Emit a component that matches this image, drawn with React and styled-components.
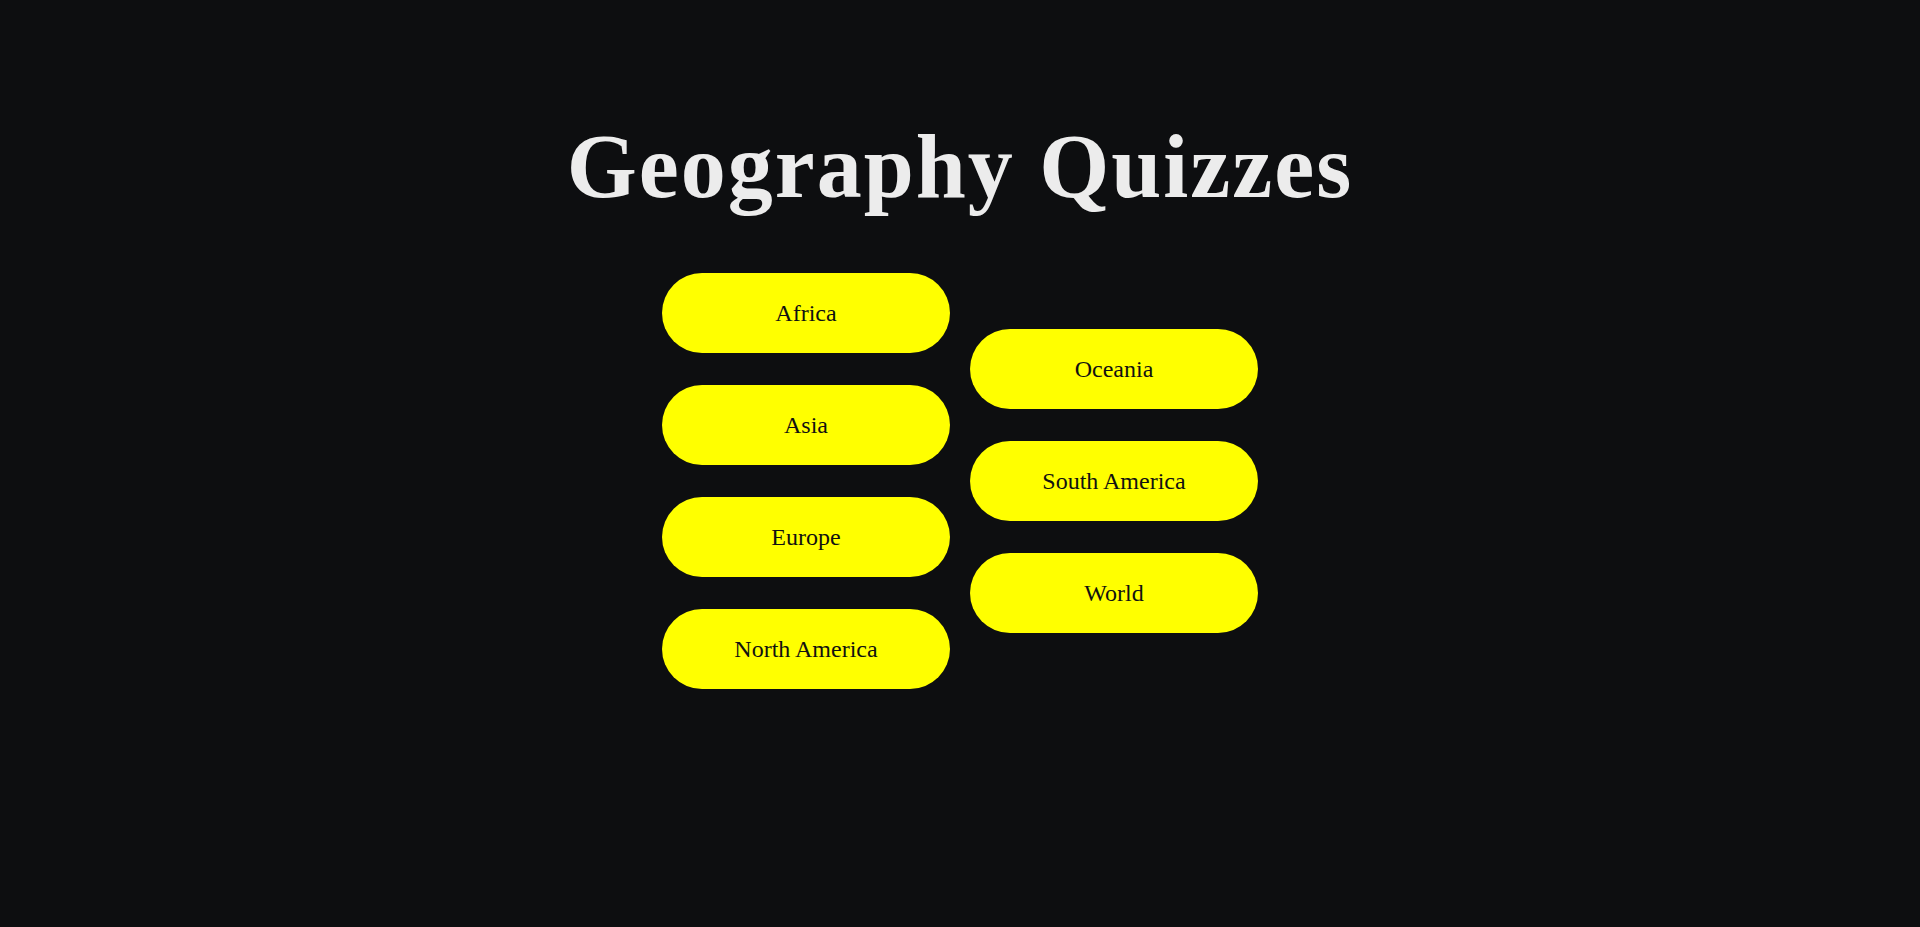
import React from 'react'
import styled, { createGlobalStyle } from 'styled-components'

const GlobalStyle = createGlobalStyle`
  html, body {
    margin: 0;
    padding: 0;
    background-color: #0d0e10;
  }
`

const Page = styled.div`
  min-height: 100vh;
  box-sizing: border-box;
  padding-top: 113px;
  display: flex;
  flex-direction: column;
  align-items: center;
  font-family: "Liberation Serif", "DejaVu Serif", serif;
`

const Title = styled.h1`
  margin: 0;
  font-size: 90px;
  line-height: 1.2;
  letter-spacing: 2px;
  font-weight: bold;
  color: #ececec;
`

const Columns = styled.div`
  margin-top: 52px;
  display: flex;
  align-items: center;
  justify-content: center;
  gap: 20px;
`

const Column = styled.div`
  display: flex;
  flex-direction: column;
  gap: 32px;
`

const QuizButton = styled.button`
  width: 288px;
  height: 80px;
  border: none;
  border-radius: 40px;
  background-color: #ffff00;
  color: #111111;
  font-family: "Liberation Serif", "DejaVu Serif", serif;
  font-size: 24px;
  cursor: pointer;
  transition: opacity .2s;

  &:hover {
    opacity: 0.85;
  }
`

const leftQuizzes = ['Africa', 'Asia', 'Europe', 'North America']
const rightQuizzes = ['Oceania', 'South America', 'World']

export default function App() {
  return (
    <Page>
      <GlobalStyle />
      <Title>Geography Quizzes</Title>
      <Columns>
        <Column>
          {leftQuizzes.map(name => <QuizButton key={name}>{name}</QuizButton>)}
        </Column>
        <Column>
          {rightQuizzes.map(name => <QuizButton key={name}>{name}</QuizButton>)}
        </Column>
      </Columns>
    </Page>
  )
}
